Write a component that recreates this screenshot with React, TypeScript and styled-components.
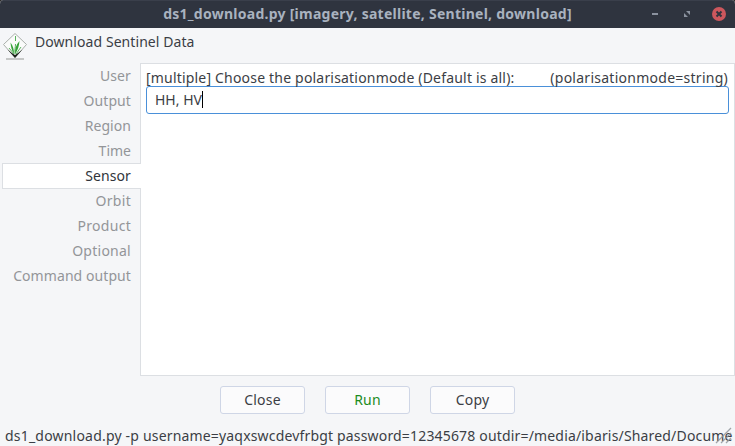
import React from "react";
import styled, { createGlobalStyle } from "styled-components";

const GlobalStyle = createGlobalStyle`
  * { box-sizing: border-box; }
  body { margin: 0; background: #2b2b2b; }
`;

const Window = styled.div`
  width: 735px;
  height: 446px;
  display: flex;
  flex-direction: column;
  overflow: hidden;
  border-radius: 4px 4px 0 0;
  background: #f5f6f8;
  color: #3b3e45;
  font: 14px/20px "Noto Sans", "Open Sans", sans-serif;
  white-space: pre;
`;

const TitleBar = styled.header`
  height: 28px;
  flex: none;
  display: grid;
  grid-template-columns: 1fr auto 1fr;
  align-items: center;
  background: #2f343f;
  box-shadow: inset 0 1px #3a3f4b;
  border-radius: 4px 4px 0 0;
`;

const Title = styled.h1`
  grid-column: 2;
  margin: 0;
  font-size: 14px;
  line-height: 20px;
  font-weight: 700;
  color: #a9b2bf;
`;

const WindowControls = styled.div`
  display: flex;
  justify-content: flex-end;
  align-items: center;
  gap: 16px;
  padding-right: 8px;

  svg { display: block; }
`;

const Heading = styled.div`
  height: 35px;
  flex: none;
  display: flex;
  padding: 4px 0 0 3px;
  gap: 7px;
`;

const Text = styled.span<{ $spacing?: number }>`
  letter-spacing: ${(p) => p.$spacing ?? 0}px;
`;

const Notebook = styled.main`
  height: 313px;
  flex: none;
  display: flex;
`;

const TabList = styled.nav`
  width: 141px;
  flex: none;
  display: flex;
  flex-direction: column;
  z-index: 1;
`;

const Tab = styled.div<{ $active?: boolean }>`
  height: ${(p) => (p.$active ? 26 : 25)}px;
  margin: 0 0 ${(p) => (p.$active ? -1 : 0)}px 2px;
  padding: ${(p) => (p.$active ? 2 : 3)}px 10px 0 0;
  text-align: right;
  color: ${(p) => (p.$active ? "#30343a" : "#939598")};
  background: ${(p) => (p.$active ? "#fff" : "transparent")};
  border: ${(p) => (p.$active ? "1px solid #dcdfe3" : "0")};
  border-right: 0;
`;

const Page = styled.section`
  flex: 1;
  margin-left: -1px;
  padding: 4px 5px;
  border: 1px solid #dcdfe3;
  background: #fff;
`;

const FieldLabel = styled.div`
  height: 18px;
  padding: 0 1px 0 0;
  display: flex;
  justify-content: space-between;
`;

const Field = styled.div`
  height: 28px;
  display: flex;
  align-items: center;
  padding: 0 8px 1px;
  border: 1px solid #4a90d9;
  border-radius: 3px;
  background: #fff;
`;

const Caret = styled.i`
  width: 1px;
  height: 17px;
  background: #000;
`;

const Actions = styled.div`
  height: 48px;
  flex: none;
  display: flex;
  justify-content: center;
  gap: 20px;
  padding-top: 10px;
`;

const Button = styled.button<{ $primary?: boolean }>`
  width: 85px;
  height: 28px;
  padding: 0 0 1px;
  font: inherit;
  letter-spacing: 0.2px;
  color: ${(p) => (p.$primary ? "#1c8c1c" : "#3b3e45")};
  background: #fbfbfc;
  border: 1px solid #cfd6e6;
  border-radius: 3px;
`;

const StatusBar = styled.footer`
  position: relative;
  height: 22px;
  flex: none;
  padding: 2px 0 0 5px;
`;

const Grip = styled.svg`
  position: absolute;
  right: 3px;
  bottom: 2px;
`;

const tabs: { name: string; spacing?: number; active?: boolean }[] = [
  { name: "User", spacing: 0.1 },
  { name: "Output", spacing: 0.1 },
  { name: "Region", spacing: 0.05 },
  { name: "Time" },
  { name: "Sensor", spacing: 0.1, active: true },
  { name: "Orbit", spacing: 0.3 },
  { name: "Product", spacing: 0.3 },
  { name: "Optional", spacing: 0.25 },
  { name: "Command output", spacing: 0.08 },
];

const GrassLogo = () => (
  <svg width="25" height="28" viewBox="0 0 25 28" fill="none">
    <path d="M12 1.5 23.5 12.5 12 25.5.5 12.5Z" fill="#fafbfa" stroke="#a9aeaa" />
    <path d="m4.5 17.5 7.5 8.5 7.5-8.5-4.5 3.5-3 2-3-2Z" fill="#1c241b" />
    <path d="M11 22C11 17 10 14 7.500 10.500 8 15 8.500 18 11 22ZM12 22c-.5-5 1-9 4.500-13-.5 5-1.500 9-4.500 13Z" fill="#35a338" />
    <path d="M12.500 4v5M12 22c-.5-4 .5-7 .5-10M6 16l5 6m2 0 5-7" stroke="#5cb35e" />
    <path d="M3 27h18" stroke="#b4b7b6" strokeWidth="1.5" />
  </svg>
);

export default function App() {
  return (
    <>
      <GlobalStyle />
      <Window>
        <TitleBar>
          <Title>
            <Text $spacing={0.26}>ds1_download.py [imagery, satellite, Sentinel, download]</Text>
          </Title>
          <WindowControls>
            <svg width="16" height="16"><path d="M5 7h6v2H5z" fill="#8b929f" /></svg>
            <svg width="16" height="16"><path d="M7 5h4v4zM5 7v4h4z" fill="#8b929f" /></svg>
            <svg width="16" height="16">
              <circle cx="8" cy="8" r="7" fill="#cc575d" />
              <path d="m5.5 5.5 5 5m0-5-5 5" stroke="#2f343f" strokeWidth="2" />
            </svg>
          </WindowControls>
        </TitleBar>
        <Heading><GrassLogo /><Text $spacing={0.07}>Download Sentinel Data</Text></Heading>
        <Notebook>
          <TabList>
            {tabs.map((t) => (
              <Tab key={t.name} $active={t.active}><Text $spacing={t.spacing}>{t.name}</Text></Tab>
            ))}
          </TabList>
          <Page>
            <FieldLabel>
              <Text $spacing={0.19}>[multiple] Choose the polarisationmode (Default is all):</Text>
              <Text $spacing={0.26}>(polarisationmode=string)</Text>
            </FieldLabel>
            <Field><Text>HH, HV</Text><Caret /></Field>
          </Page>
        </Notebook>
        <Actions>
          <Button>Close</Button>
          <Button $primary>Run</Button>
          <Button>Copy</Button>
        </Actions>
        <StatusBar>
          <Text $spacing={0.2}>ds1_download.py -p </Text>
          <Text $spacing={0.17}>username=yaqxswcdevfrbgt password=12345678 outdir=/media/ibaris/Shared/Docume</Text>
          <Grip width="17" height="17" stroke="#8f959b" strokeOpacity="0.85" strokeWidth="1.3">
            <path d="M1 16 16 1M6 16 16 6M11 16l5-5" />
          </Grip>
        </StatusBar>
      </Window>
    </>
  );
}
